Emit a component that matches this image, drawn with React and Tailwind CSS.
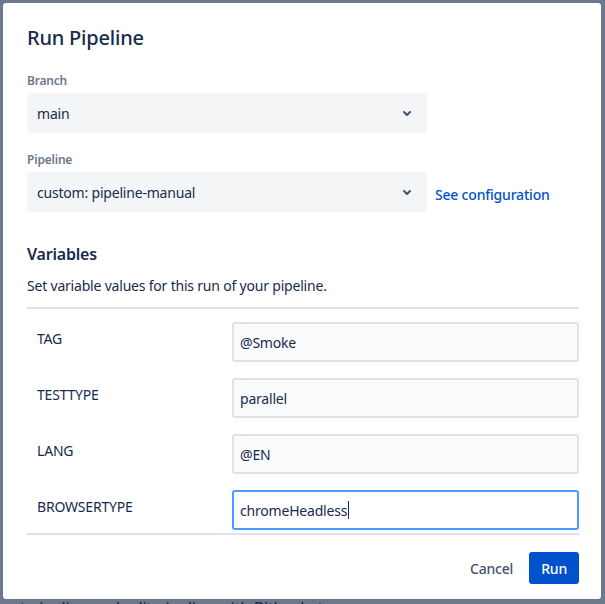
import { useState } from 'react';

const VARIABLES = [
  { key: 'TAG', value: '@Smoke' },
  { key: 'TESTTYPE', value: 'parallel' },
  { key: 'LANG', value: '@EN' },
  { key: 'BROWSERTYPE', value: 'chromeHeadless', focused: true },
];

const ChevronDown = () => (
  <svg width="24" height="24" viewBox="0 0 24 24" className="shrink-0">
    <path
      fill="#42526e"
      d="M8.292 10.293a1.009 1.009 0 000 1.419l2.939 2.965c.218.215.5.322.779.322s.556-.107.769-.322l2.93-2.955a1.01 1.01 0 000-1.419.987.987 0 00-1.406 0l-2.298 2.317-2.307-2.327a.99.99 0 00-1.406 0z"
    />
  </svg>
);

const SelectBox = ({ value }) => (
  <div className="flex h-10 w-[400px] items-center justify-between rounded-[3px] bg-[#f4f5f7] pl-[10px] pr-2 text-[14px] text-[#172b4d]">
    <span>{value}</span>
    <ChevronDown />
  </div>
);

const App = () => {
  const [vars] = useState(VARIABLES);

  return (
    <div className="relative h-[604px] w-[605px] overflow-hidden bg-white font-['Noto_Sans','Open_Sans',sans-serif] tracking-[-0.2px]">
      {/* page behind the blanket */}
      <div className="absolute left-[20px] top-[596px] whitespace-nowrap text-[16px] text-[#172b4d]">
        t pipeline and edit pipeline with Bitbucket
      </div>
      <div className="absolute inset-0 bg-[rgba(9,30,66,0.6)]" />

      <div className="absolute left-[3px] top-[3px] flex h-[596px] w-[598px] flex-col rounded-[3px] bg-white pl-6 pr-[22px] pt-[23px] text-[#172b4d]">
        <h1 className="text-[20px] font-medium leading-6">Run Pipeline</h1>

        <label className="mt-[23px] text-[12px] font-semibold leading-4 text-[#6b778c]">Branch</label>
        <div className="mt-[4px]">
          <SelectBox value="main" />
        </div>

        <label className="mt-[19px] text-[12px] font-semibold leading-4 text-[#6b778c]">Pipeline</label>
        <div className="mt-[4px] flex items-center gap-2">
          <SelectBox value="custom: pipeline-manual" />
          <a href="#" className="mt-[5px] text-[14px] font-medium text-[#0052cc]">
            See configuration
          </a>
        </div>

        <h2 className="mt-[32px] text-[16px] font-semibold leading-5">Variables</h2>
        <p className="mt-[12px] text-[14px] leading-5">Set variable values for this run of your pipeline.</p>

        <div className="mt-[11px] flex flex-col gap-4 border-y-2 border-[#dfe1e6] pb-[3px] pt-[13px]">
          {vars.map((v) => (
            <div key={v.key} className="flex items-start">
              <div className="mt-[7px] w-[205px] pl-[10px] text-[14px] leading-5">{v.key}</div>
              <div
                className={
                  v.focused
                    ? 'flex h-10 flex-1 items-center rounded-[3px] border-2 border-[#4c9aff] bg-white px-[6px] text-[14px]'
                    : 'flex h-10 flex-1 items-center rounded-[3px] border-2 border-[#dfe1e6] bg-[#fafbfc] px-[6px] text-[14px]'
                }
              >
                <span>{v.value}</span>
                {v.focused ? <span className="ml-px h-[18px] w-px bg-[#172b4d]" /> : null}
              </div>
            </div>
          ))}
        </div>

        <div className="mt-[17px] flex items-center justify-end gap-[6px]">
          <button type="button" className="h-8 rounded-[3px] px-[10px] text-[14px] font-medium text-[#42526e]">
            Cancel
          </button>
          <button type="button" className="h-8 rounded-[3px] bg-[#0052cc] px-[12px] text-[14px] font-medium text-white">
            Run
          </button>
        </div>
      </div>
    </div>
  );
};

export default App;
